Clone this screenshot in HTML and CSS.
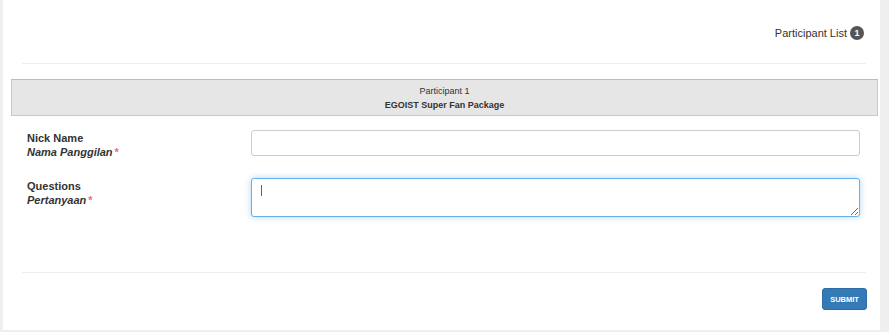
FILE: index.html
```html
<!DOCTYPE html>
<html>
<head>
    <title>Participant</title>
    <link rel="stylesheet" href="styles.css">
</head>
<body>
    <div class="panel">
        <div class="top-row">
            <span class="list-link">Participant List</span>
            <span class="badge">1</span>
        </div>
        <div class="divider"></div>

        <div class="package-bar">
            <div>Participant 1</div>
            <div class="package-name">EGOIST Super Fan Package</div>
        </div>

        <!-- form fields -->
        <div class="form-div">
            <div class="form-row">
                <div class="label">
                    <div class="label-en">Nick Name</div>
                    <div class="label-id">Nama Panggilan<span class="req">*</span></div>
                </div>
                <input type="text" class="field">
            </div>
            <div class="form-row">
                <div class="label">
                    <div class="label-en">Questions</div>
                    <div class="label-id">Pertanyaan<span class="req">*</span></div>
                </div>
                <div class="area-wrap">
                    <textarea class="field area"></textarea>
                    <span class="caret"></span>
                </div>
            </div>
        </div>

        <div class="divider bottom"></div>
        <div class="button-div">
            <button>SUBMIT</button>
        </div>
    </div>
</body>
</html>
```

FILE: styles.css
```css
body{
    margin: 0;
    padding: 0;
    background-color: #efefef;
    font-family: "Liberation Sans", Arial, sans-serif;
    color: #333;
}
.panel{
    margin-left: 3px;
    width: 877px;
    height: 330px;
    background-color: white;
    display: flex;
    flex-direction: column;
}
.top-row{
    display: flex;
    justify-content: flex-end;
    align-items: center;
    gap: 3px;
    height: 14px;
    padding-top: 26px;
    padding-right: 16px;
    margin-bottom: 23px;
    font-size: 11px;
}
.badge{
    width: 14px;
    height: 14px;
    border-radius: 50%;
    background-color: #555;
    color: white;
    font-size: 9px;
    font-weight: bold;
    display: flex;
    align-items: center;
    justify-content: center;
}
.divider{
    height: 1px;
    background-color: #eee;
    margin-left: 19px;
    margin-right: 14px;
}
.package-bar{
    margin: 15px 2px 0 8px;
    height: 35px;
    background-color: #e6e6e6;
    border: 1px solid #c8c8c8;
    border-top-color: #bbb;
    font-size: 9px;
    line-height: 14px;
    text-align: center;
    display: flex;
    flex-direction: column;
    justify-content: center;
    color: #333;
}
.package-name{
    font-weight: bold;
}
.form-div{
    display: flex;
    flex-direction: column;
    gap: 19px;
    padding: 14px 20px 0 24px;
}
.form-row{
    display: flex;
    align-items: flex-start;
}
.label{
    width: 224px;
    font-size: 11px;
    font-weight: bold;
    line-height: 14px;
    padding-top: 1px;
}
.label-id{
    font-style: italic;
}
.req{
    color: #e8706e;
    margin-left: 2px;
    font-style: normal;
}
.field{
    flex: 1;
    height: 26px;
    box-sizing: border-box;
    border: 1px solid #ccc;
    border-radius: 3px;
    font-family: inherit;
    margin: 0;
}
.area-wrap{
    flex: 1;
    display: flex;
    position: relative;
}
.area{
    height: 39px;
    border-color: #66afe9;
    box-shadow: 0 0 6px rgba(102, 175, 233, 0.5);
    outline: none;
}
.caret{
    position: absolute;
    left: 10px;
    top: 7px;
    width: 1px;
    height: 11px;
    background-color: #666;
}
.bottom{
    margin-top: 55px;
}
.button-div{
    display: flex;
    justify-content: flex-end;
    padding-right: 13px;
    margin-top: 15px;
}
button{
    height: 22px;
    width: 45px;
    padding: 0;
    background-color: #337ab7;
    border: 1px solid #2e6da4;
    border-radius: 3px;
    color: white;
    font-family: inherit;
    font-size: 7.5px;
    font-weight: bold;
}
```
